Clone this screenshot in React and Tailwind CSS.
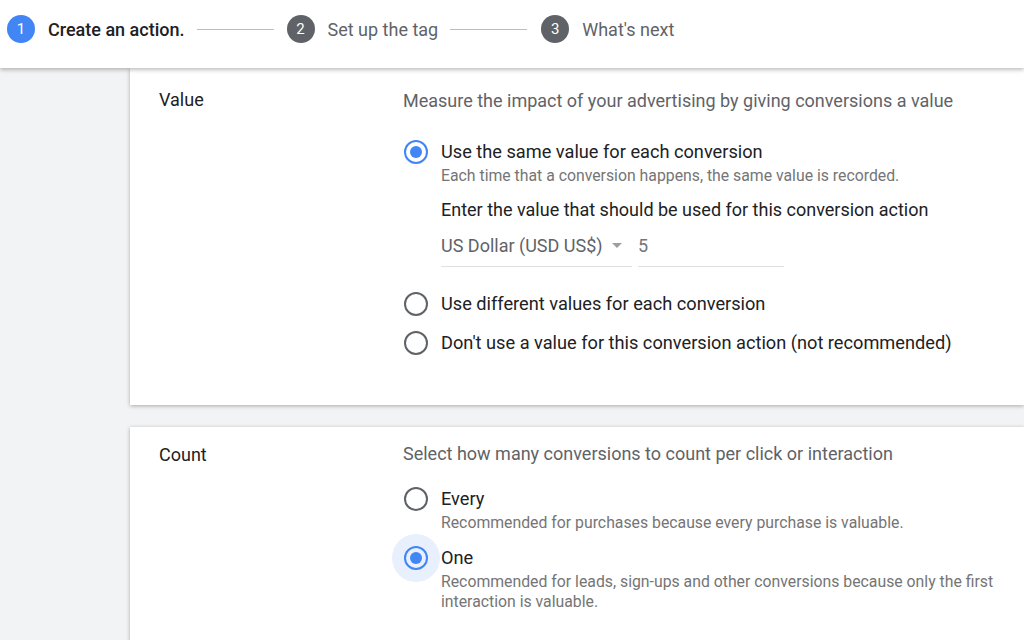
import { useState } from "react";

function Step({ n, label, active }) {
  return (
    <div className="flex items-center">
      <div
        className={`w-[28px] h-[28px] rounded-full flex items-center justify-center text-white text-[15px] ${
          active ? "bg-[#4285f4]" : "bg-[#5f6368]"
        }`}
      >
        {n}
      </div>
      <span
        className={`ml-[13px] text-[18px] ${
          active ? "font-medium text-[#202124]" : "text-[#5f6368]"
        }`}
      >
        {label}
      </span>
    </div>
  );
}

function Radio({ checked, halo }) {
  return (
    <div className="relative w-[26px] h-[26px] shrink-0 flex items-center justify-center">
      {halo && (
        <div className="absolute w-[48px] h-[48px] rounded-full bg-[#e8f0fe]"></div>
      )}
      <div
        className={`relative w-[24px] h-[24px] rounded-full border-[2px] flex items-center justify-center ${
          checked ? "border-[#4285f4]" : "border-[#5f6368]"
        }`}
      >
        {checked && <div className="w-[12px] h-[12px] rounded-full bg-[#4285f4]"></div>}
      </div>
    </div>
  );
}

function Option({ checked, halo, label, sub, children, onPick }) {
  return (
    <div className="flex items-start" onClick={onPick}>
      <Radio checked={checked} halo={halo} />
      <div className="ml-[12px]">
        <div className="text-[18.2px] leading-[26px] text-[#202124]">{label}</div>
        {sub && (
          <div className="text-[15.8px] leading-[20px] mt-[1px] text-[#757575]">{sub}</div>
        )}
        {children}
      </div>
    </div>
  );
}

export default function App() {
  const [value, setValue] = useState("same");
  const [count, setCount] = useState("one");

  return (
    <div className="w-[1024px] h-[640px] overflow-hidden bg-[#f1f3f4] font-['Roboto',sans-serif] flex flex-col">
      <div className="relative z-10 h-[68px] shrink-0 bg-white shadow-[0_2px_4px_rgba(0,0,0,0.25)] flex items-center pl-[7px] pb-[10px]">
        <Step n="1" label="Create an action." active />
        <div className="w-[77px] h-px bg-[#bdbdbd] ml-[12px] mr-[13px]"></div>
        <Step n="2" label="Set up the tag" />
        <div className="w-[77px] h-px bg-[#bdbdbd] ml-[12px] mr-[14px]"></div>
        <Step n="3" label="What's next" />
      </div>

      <div className="pl-[130px] flex flex-col gap-[22px]">
        <div className="bg-white h-[337px] shadow-[0_1px_4px_rgba(0,0,0,0.3)] flex pt-[20px]">
          <div className="w-[273px] pl-[29px] text-[18px] text-[#202124] leading-[24px]">Value</div>
          <div className="flex-1">
            <div className="text-[18px] text-[#5f6368] leading-[24px] mt-[1px]">
              Measure the impact of your advertising by giving conversions a value
            </div>
            <div className="mt-[26px] flex flex-col">
              <Option
                checked={value === "same"}
                label="Use the same value for each conversion"
                sub="Each time that a conversion happens, the same value is recorded."
                onPick={() => setValue("same")}
              >
                <div className="text-[18px] text-[#202124] leading-[24px] mt-[12px]">
                  Enter the value that should be used for this conversion action
                </div>
                <div className="flex mt-[8px] gap-[6px]">
                  <div className="w-[191px] h-[37px] pb-[6px] border-b border-[#e0e0e0] flex items-center text-[18px] text-[#5f6368]">
                    US Dollar (USD US$)
                    <span className="ml-[9px] w-0 h-0 border-l-[5px] border-r-[5px] border-t-[5px] border-l-transparent border-r-transparent border-t-[#9e9e9e]"></span>
                  </div>
                  <div className="w-[146px] h-[37px] pb-[6px] border-b border-[#e0e0e0] flex items-center text-[18px] text-[#757575]">
                    5
                  </div>
                </div>
              </Option>
              <div className="mt-[24px]">
                <Option
                  checked={value === "diff"}
                  label="Use different values for each conversion"
                  onPick={() => setValue("diff")}
                />
              </div>
              <div className="mt-[13px]">
                <Option
                  checked={value === "none"}
                  label="Don't use a value for this conversion action (not recommended)"
                  onPick={() => setValue("none")}
                />
              </div>
            </div>
          </div>
        </div>

        <div className="bg-white h-[300px] shadow-[0_1px_4px_rgba(0,0,0,0.3)] flex pt-[16px]">
          <div className="w-[273px] pl-[29px] text-[18px] text-[#202124] leading-[24px]">Count</div>
          <div className="flex-1">
            <div className="text-[18px] text-[#5f6368] leading-[24px] mt-[-1px]">
              Select how many conversions to count per click or interaction
            </div>
            <div className="mt-[20px] flex flex-col">
              <Option
                checked={count === "every"}
                label="Every"
                sub="Recommended for purchases because every purchase is valuable."
                onPick={() => setCount("every")}
              />
              <div className="mt-[12px]">
                <Option
                  checked={count === "one"}
                  halo
                  label="One"
                  sub={
                    <span className="block w-[565px]">
                      Recommended for leads, sign-ups and other conversions because only the first interaction is valuable.
                    </span>
                  }
                  onPick={() => setCount("one")}
                />
              </div>
            </div>
          </div>
        </div>
      </div>
    </div>
  );
}
